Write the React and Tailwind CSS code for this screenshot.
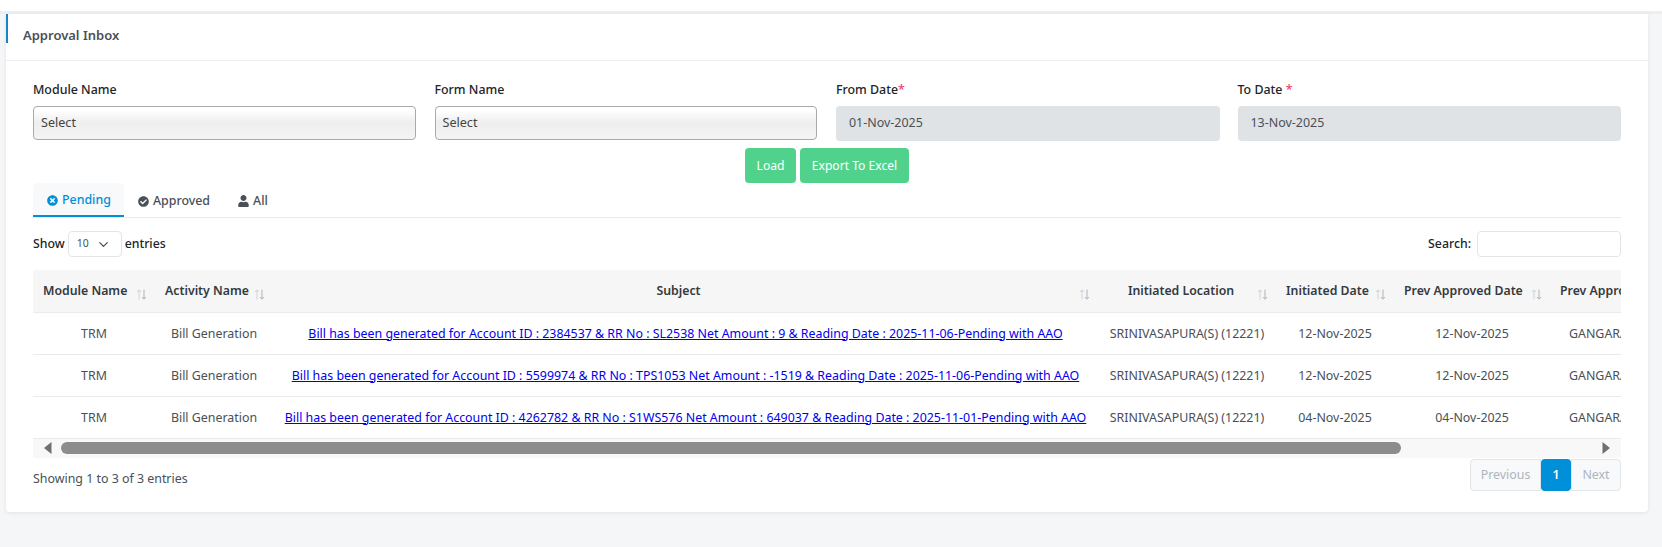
import React from "react";
import { ChevronDown } from "lucide-react";
import { FaTimesCircle, FaCheckCircle, FaUser } from "react-icons/fa";

const rows = [
  {
    subject:
      "Bill has been generated for Account ID : 2384537 & RR No : SL2538 Net Amount : 9 & Reading Date : 2025-11-06-Pending with AAO",
    initiated: "12-Nov-2025",
    prev: "12-Nov-2025",
  },
  {
    subject:
      "Bill has been generated for Account ID : 5599974 & RR No : TPS1053 Net Amount : -1519 & Reading Date : 2025-11-06-Pending with AAO",
    initiated: "12-Nov-2025",
    prev: "12-Nov-2025",
  },
  {
    subject:
      "Bill has been generated for Account ID : 4262782 & RR No : S1WS576 Net Amount : 649037 & Reading Date : 2025-11-01-Pending with AAO",
    initiated: "04-Nov-2025",
    prev: "04-Nov-2025",
  },
];

const SortIcon = () => (
  <svg
    width="11"
    height="11"
    viewBox="0 0 11 11"
    fill="none"
    stroke="#ced4da"
    strokeWidth="1"
    className="absolute right-[8px] top-[19px]"
  >
    <path d="M3 10.5V1M1 3l2-2.2L5 3" />
    <path d="M8 .5V10M6 8l2 2.2L10 8" stroke="#adb5bd" />
  </svg>
);

const Th = ({ children, className = "" }) => (
  <th
    className={`relative h-[42px] border-b border-[#e9ecef] pl-[10px] text-[12.3px] font-semibold text-[#343a40] whitespace-nowrap overflow-hidden ${className}`}
  >
    {children}
    <SortIcon />
  </th>
);

const Td = ({ children, className = "text-center" }) => (
  <td
    className={`h-[42px] border-b border-[#e9ecef] pt-[2px] text-[12.4px] text-[#495057] whitespace-nowrap overflow-hidden ${className}`}
  >
    {children}
  </td>
);

const FakeSelect = ({ label }) => (
  <div>
    <div className="mb-[6px] h-[21px] pt-[1px] text-[12.4px] leading-[20px] font-medium text-[#212529]">
      {label}
    </div>
    <div className="mr-[1px] flex h-[34px] items-center rounded-[4px] border border-[#aaaaaa] bg-[linear-gradient(to_bottom,#ffffff_10%,#eeeeee_50%,#f4f4f4_100%)] pl-[7px] text-[12.6px] text-[#444444]">
      Select
    </div>
  </div>
);

const DateField = ({ label, required, value }) => (
  <div>
    <div className="mb-[6px] h-[21px] pt-[1px] text-[12.4px] leading-[20px] font-medium text-[#212529]">
      {label}
      <span className="text-[#f1416c]">{required}</span>
    </div>
    <div className="flex h-[35px] items-center rounded-[4px] bg-[#e0e3e6] pl-[13px] text-[12.45px] text-[#495057]">
      {value}
    </div>
  </div>
);

const Tab = ({ icon, label, active }) => (
  <div
    className={`flex h-[34px] items-center gap-[4px] rounded-t-[4px] px-[14px] pt-[2px] text-[12.4px] font-medium ${
      active
        ? "border-b-2 border-[#0090d9] bg-[#f8f9fa] pr-[13px] text-[#0090d9]"
        : "text-[#495057]"
    }`}
  >
    {icon}
    {label}
  </div>
);

const App = () => {
  return (
    <div
      className="h-[547px] overflow-hidden bg-[#f5f6f8]"
      style={{ fontFamily: '"Noto Sans", sans-serif' }}
    >
      <div className="h-[14px] border-b-[3px] border-[#eceef1] bg-white" />
      <div className="ml-[6px] mr-[14px] h-[498px] rounded-b-[4px] bg-white shadow-[0_1px_4px_rgba(0,0,0,0.08)]">
        <div className="relative flex h-[47px] items-center border-b border-[#eceef1] pl-[17px] pb-[2px] text-[13px] font-semibold text-[#495057]">
          <span className="absolute left-0 top-0 h-[29px] w-[2px] bg-[#1583c7]" />
          Approval Inbox
        </div>

        <div className="px-[27px] pt-[18px]">
          <div className="grid grid-cols-4 gap-x-[18px]">
            <FakeSelect label="Module Name" />
            <FakeSelect label="Form Name" />
            <DateField label="From Date" required="*" value="01-Nov-2025" />
            <DateField label="To Date " required="*" value="13-Nov-2025" />
          </div>

          <div className="mt-[7px] flex justify-center gap-[4px]">
            <button className="h-[35px] w-[51px] rounded-[4px] bg-[#50d28d] pt-[2px] text-[12.1px] text-white">
              Load
            </button>
            <button className="h-[35px] w-[109px] rounded-[4px] bg-[#50d28d] pt-[2px] text-[12.1px] text-white">
              Export To Excel
            </button>
          </div>

          <div className="flex border-b border-[#e9ecef]">
            <Tab
              active
              label="Pending"
              icon={<FaTimesCircle className="h-[11px] w-[11px]" />}
            />
            <Tab
              label="Approved"
              icon={<FaCheckCircle className="h-[11px] w-[11px]" />}
            />
            <Tab
              label="All"
              icon={<FaUser className="h-[12px] w-[11px]" />}
            />
          </div>

          <div className="mt-[13px] flex h-[26px] items-center justify-between text-[12.3px] font-medium text-[#212529]">
            <div className="flex items-center gap-[3px]">
              Show
              <div className="flex h-[26px] w-[54px] items-center rounded-[4px] border border-[#e2e5e8] pl-[8px] text-[10.5px] font-normal text-[#495057]">
                10
                <ChevronDown
                  className="ml-[7px] h-[15px] w-[15px]"
                  strokeWidth={2}
                />
              </div>
              entries
            </div>
            <div className="flex items-center gap-[6px]">
              Search:
              <div className="h-[26px] w-[144px] rounded-[4px] border border-[#e2e5e8]" />
            </div>
          </div>

          <div className="mt-[13px] overflow-hidden">
            <table className="w-[1820px] table-fixed border-collapse">
              <colgroup>
                <col className="w-[122px]" />
                <col className="w-[118px]" />
                <col className="w-[825px]" />
                <col className="w-[178px]" />
                <col className="w-[118px]" />
                <col className="w-[156px]" />
                <col className="w-[303px]" />
              </colgroup>
              <thead className="bg-[#f6f6f6]">
                <tr>
                  <Th className="text-left">Module Name</Th>
                  <Th className="text-left">Activity Name</Th>
                  <Th className="pr-[24px] text-center">Subject</Th>
                  <Th className="pr-[22px] text-center">Initiated Location</Th>
                  <Th className="text-left">Initiated Date</Th>
                  <Th className="text-left">Prev Approved Date</Th>
                  <Th className="text-left">Prev Approver</Th>
                </tr>
              </thead>
              <tbody>
                {rows.map((row) => (
                  <tr key={row.subject}>
                    <Td>TRM</Td>
                    <Td>Bill Generation</Td>
                    <Td>
                      <a href="#" className="text-[#0000ee] underline">
                        {row.subject}
                      </a>
                    </Td>
                    <Td>SRINIVASAPURA(S) (12221)</Td>
                    <Td>{row.initiated}</Td>
                    <Td>{row.prev}</Td>
                    <Td className="pl-[19px] text-left">GANGARAJU</Td>
                  </tr>
                ))}
              </tbody>
            </table>

            <div className="flex h-[19px] items-center bg-[#f8f8f8] pl-[11px] pr-[11px]">
              <svg width="8" height="12" viewBox="0 0 8 12" fill="#6f6f6f">
                <path d="M7.5 0v12L0 6z" />
              </svg>
              <div className="ml-[9px] h-[12px] w-[1340px] rounded-full bg-[#8c8c8c]" />
              <svg
                className="ml-auto"
                width="8"
                height="12"
                viewBox="0 0 8 12"
                fill="#6f6f6f"
              >
                <path d="M.5 0v12L8 6z" />
              </svg>
            </div>
          </div>

          <div className="mt-[1px] flex items-start justify-between">
            <div className="mt-[11px] text-[12.4px] text-[#495057]">
              Showing 1 to 3 of 3 entries
            </div>
            <div className="flex h-[32px] text-[12.4px]">
              <div className="flex w-[71px] items-center justify-center rounded-l-[4px] border border-[#e2e5e8] bg-[#f8f9fa] pt-[2px] text-[#adb5bd]">
                Previous
              </div>
              <div className="flex w-[30px] items-center justify-center rounded-[4px] bg-[#0090d9] pt-[2px] font-semibold text-white">
                1
              </div>
              <div className="flex w-[50px] items-center justify-center rounded-r-[4px] border border-[#e2e5e8] bg-[#f8f9fa] pt-[2px] text-[#adb5bd]">
                Next
              </div>
            </div>
          </div>
        </div>
      </div>
    </div>
  );
};

export default App;
